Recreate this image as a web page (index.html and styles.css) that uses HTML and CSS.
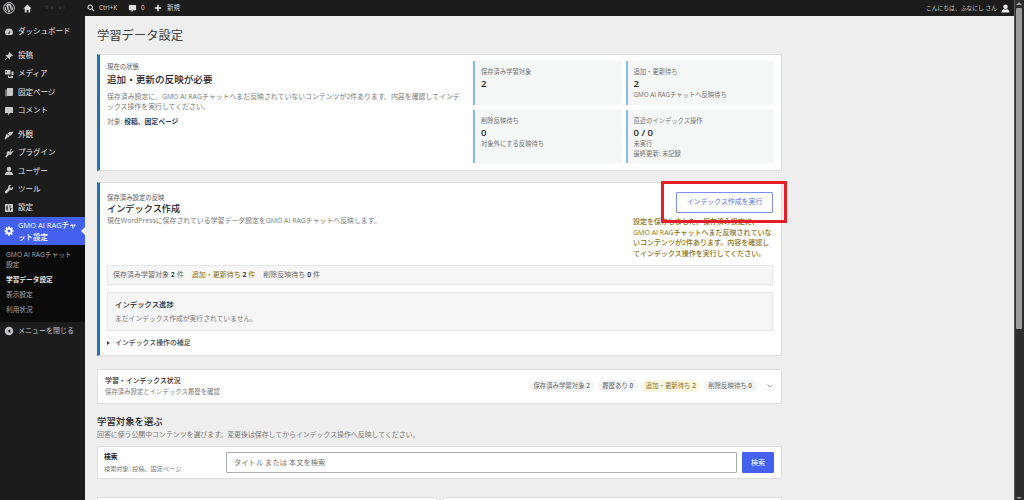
FILE: index.html
```html
<!DOCTYPE html>
<html lang="ja">
<head>
<meta charset="utf-8">
<title>学習データ設定</title>
<link rel="stylesheet" href="styles.css">
</head>
<body>
<div class="page">
  <header class="adminbar">
    <svg class="bar-wp" viewBox="0 0 20 20"><circle cx="10" cy="10" r="9" fill="none" stroke="#c3c4c7" stroke-width="1.600"/><path fill="#c3c4c7" d="M3 10c0 2.800 1.600 5.200 4 6.300L3.600 7.100A7 7 0 0 0 3 10zm11.700-.400c0-.900-.300-1.500-.600-2-.400-.600-.700-1.100-.700-1.600 0-.700.500-1.300 1.200-1.300A7 7 0 0 0 4 6.200h.500c.700 0 1.900-.100 1.900-.100.400 0 .400.500 0 .600l-.800.100 2.600 7.700 1.600-4.700-1.100-3-.800-.100c-.400 0-.300-.600 0-.600 0 0 1.200.100 1.900.100s1.900-.100 1.900-.100c.400 0 .400.500 0 .600l-.800.100 2.600 7.600.700-2.400c.300-1 .500-1.700.500-2.300zM10.100 10.700l-2.100 6.100a7 7 0 0 0 4.300-.100zM16.200 6.700c0 .700-.100 1.500-.500 2.500l-2.100 6.100A7 7 0 0 0 16.200 6.700z"/></svg>
    <svg class="bar-ico home" viewBox="0 0 20 20"><path fill="#e0e0e0" d="M10 1 1 10h3v9h4v-6h4v6h4v-9h3z"/></svg>
    <span class="bar-site">ｈ ｓ　ｓｉ</span>
    <svg class="bar-ico search" viewBox="0 0 20 20"><circle cx="8" cy="8" r="5.500" fill="none" stroke="#e8e8e8" stroke-width="2.600"/><path stroke="#e8e8e8" stroke-width="3" d="m12 12 6 6"/></svg>
    <span class="bar-text kbd">Ctrl+K</span>
    <svg class="bar-ico bubble" viewBox="0 0 20 20"><path fill="#e0e0e0" d="M3 2h14a1 1 0 0 1 1 1v10a1 1 0 0 1-1 1h-5l-4 5v-5H3a1 1 0 0 1-1-1V3a1 1 0 0 1 1-1z"/></svg>
    <span class="bar-text count">0</span>
    <svg class="bar-ico plus" viewBox="0 0 20 20"><path fill="#e8e8e8" d="M8 2h4v6h6v4h-6v6H8v-6H2V8h6z"/></svg>
    <span class="bar-text new">新規</span>
    <span class="bar-greet">こんにちは、ふなにし さん</span>
    <svg class="bar-ico user" viewBox="0 0 20 20"><circle cx="10" cy="6" r="5" fill="#ececec"/><path fill="#ececec" d="M1 19c0-4 3-7 5.500-8 2 1.500 5 1.500 7 0 2.500 1 5.500 4 5.500 8z"/></svg>
  </header>
  <div class="layout">
    <nav class="sidebar">
      <ul class="menu">
        <li class="item"><svg class="mi" viewBox="0 0 20 20"><path d="M10 3a8 8 0 0 0-8 8c0 2 .700 3.700 2 5h12c1.300-1.300 2-3 2-5a8 8 0 0 0-8-8zm1 8a1.500 1.500 0 1 1-2 .200L13 7z"/></svg>ダッシュボード</li>
        <li class="sep"></li>
        <li class="item"><svg class="mi" viewBox="0 0 20 20"><path d="m10.400 2 7.600 7.600-1.600 1-1.600-.600-3 3c.400 1.500.200 3-.600 4.200L7.400 13 3 18l-1 0 0-1 5-4.400-4.200-3.800c1.200-.800 2.700-1 4.200-.600l3-3-.600-1.600z"/></svg>投稿</li>
        <li class="item"><svg class="mi" viewBox="0 0 20 20"><path d="M2 2h11v9H2zm2.500 2a1.500 1.500 0 1 0 0 3 1.500 1.500 0 0 0 0-3zM8 13h2v3h3v-2h5v4H8zm7-8h4v7h-4z"/></svg>メディア</li>
        <li class="item"><svg class="mi" viewBox="0 0 20 20"><path d="M6 2h12v14c0 1-1 2-2 2H6zM3 5h2v14h9v0H5c-1 0-2-1-2-2z"/></svg>固定ページ</li>
        <li class="item"><svg class="mi" viewBox="0 0 20 20"><path d="M3 2h14a1 1 0 0 1 1 1v10a1 1 0 0 1-1 1h-5l-4 5v-5H3a1 1 0 0 1-1-1V3a1 1 0 0 1 1-1z"/></svg>コメント</li>
        <li class="sep"></li>
        <li class="item"><svg class="mi" viewBox="0 0 20 20"><path d="M19 3 11 4 7 7l5 5 4-3.500zM6 8l-3 2 1 1-3 6 2 2 5-5 1 1 2-3z"/></svg>外観</li>
        <li class="item"><svg class="mi" viewBox="0 0 20 20"><path d="m14 1 2 2-3 3 2 2 3-3 1 2-3 3-1 2c-1 2-3 2-5 1l-5 6-3-1 4-6c-1-2-1-4 1-5l2-1 2 2z"/></svg>プラグイン</li>
        <li class="item"><svg class="mi" viewBox="0 0 20 20"><circle cx="10" cy="6" r="4.500"/><path d="M2 18c0-4 3-7 8-7s8 3 8 7z"/></svg>ユーザー</li>
        <li class="item"><svg class="mi" viewBox="0 0 20 20"><path d="M17.500 5.500 14 9l-3-3 3.500-3.500c-2.500-1-5 0-6 2-.500 1-.500 2.500 0 3.500L2 15c-1 1 0 3 1 3.500s2 .500 3-.500l6.500-6.500c1 .500 2.500.500 3.500 0 2-1 3-3.500 1.500-6z"/></svg>ツール</li>
        <li class="item"><svg class="mi" viewBox="0 0 20 20"><path d="M2 2h16v16H2zm3 3v4h2V5zm0 6v4h2v-4h1V9H4v2zm6-6v4h2V5zm1 5v5h2v-3h1v-2z" fill-rule="evenodd"/></svg>設定</li>
        <li class="item current"><svg class="mi" viewBox="0 0 20 20"><path fill-rule="evenodd" d="m8.500 1h3l.500 2.500 1.500.600 2.200-1.400 2.100 2.100-1.400 2.200.600 1.500L19 8.500v3l-2.500.500-.600 1.500 1.400 2.200-2.100 2.100-2.200-1.400-1.500.600-.500 2.500h-3L8 16.500l-1.500-.600-2.200 1.400-2.100-2.100 1.400-2.200-.600-1.500L1 11.500v-3L3.500 8l.600-1.500-1.400-2.200 2.100-2.100 2.200 1.400L8 3.500zM10 7a3 3 0 1 0 0 6 3 3 0 0 0 0-6z"/></svg><span>GMO AI RAGチャット設定</span></li>
      </ul>
      <ul class="submenu">
        <li>GMO AI RAGチャット設定</li>
        <li class="on">学習データ設定</li>
        <li>表示設定</li>
        <li>利用状況</li>
      </ul>
      <div class="item collapse"><svg class="mi" viewBox="0 0 20 20"><path fill-rule="evenodd" d="M10 1.500a8.500 8.500 0 1 1 0 17 8.500 8.500 0 0 1 0-17zM12.500 6l-5 4 5 4z"/></svg>メニューを閉じる</div>
    </nav>
    <main class="main">
      <h1 class="title">学習データ設定</h1>

      <section class="card status">
        <div class="status-text">
          <p class="eyebrow">現在の状態</p>
          <h2 class="status-head">追加・更新の反映が必要</h2>
          <p class="desc">保存済み設定に、GMO AI RAGチャットへまだ反映されていないコンテンツが2件あります。内容を確認してインデックス操作を実行してください。</p>
          <p class="target">対象: <b>投稿、固定ページ</b></p>
        </div>
        <div class="stats">
          <div class="stat"><p class="stat-l">保存済み学習対象</p><p class="stat-n">2</p></div>
          <div class="stat"><p class="stat-l">追加・更新待ち</p><p class="stat-n">2</p><p class="stat-l">GMO AI RAGチャットへ反映待ち</p></div>
          <div class="stat"><p class="stat-l">削除反映待ち</p><p class="stat-n">0</p><p class="stat-l">対象外にする反映待ち</p></div>
          <div class="stat"><p class="stat-l">直近のインデックス操作</p><p class="stat-n">0 / 0</p><p class="stat-l">未実行</p><p class="stat-l">最終更新: 未記録</p></div>
        </div>
      </section>

      <section class="card index">
        <div class="index-top">
          <div class="index-text">
            <p class="eyebrow">保存済み設定の反映</p>
            <h2 class="index-head">インデックス作成</h2>
            <p class="desc">現在WordPressに保存されている学習データ設定をGMO AI RAGチャットへ反映します。</p>
          </div>
          <div class="index-act">
            <button class="run">インデックス作成を実行</button>
            <p class="notice">設定を保存しました。保存済み設定に、GMO AI RAGチャットへまだ反映されていないコンテンツが2件あります。内容を確認してインデックス操作を実行してください。</p>
          </div>
        </div>
        <div class="counts"><span>保存済み学習対象 <b>2</b> 件</span><span class="warn">追加・更新待ち <b>2</b> 件</span><span>削除反映待ち <b>0</b> 件</span></div>
        <div class="progress">
          <h3>インデックス進捗</h3>
          <p>まだインデックス作成が実行されていません。</p>
        </div>
        <p class="more"><i></i>インデックス操作の補足</p>
      </section>

      <section class="card accordion">
        <div>
          <h3>学習・インデックス状況</h3>
          <p>保存済み設定とインデックス履歴を確認</p>
        </div>
        <div class="pills">
          <span class="pill">保存済み学習対象 <b>2</b></span>
          <span class="pill">履歴あり <b>0</b></span>
          <span class="pill amber">追加・更新待ち <b>2</b></span>
          <span class="pill">削除反映待ち <b>0</b></span>
          <svg class="chev" viewBox="0 0 10 6"><path d="m1 1 4 4 4-4" fill="none" stroke="#646970" stroke-width="1.200"/></svg>
        </div>
      </section>

      <h2 class="sec-head">学習対象を選ぶ</h2>
      <p class="sec-desc">回答に使う公開中コンテンツを選びます。変更後は保存してからインデックス操作へ反映してください。</p>

      <section class="card search-box">
        <div class="search-label">
          <b>検索</b>
          <span>検索対象: 投稿、固定ページ</span>
        </div>
        <div class="search-field">タイトル または 本文を検索</div>
        <button class="search-btn">検索</button>
      </section>

      <div class="lists">
        <div class="card list"></div>
        <div class="card list"></div>
      </div>
    </main>
  </div>
  <div class="callout"></div>
</div>
<div class="scrollbar"><i class="up"></i><i class="thumb"></i><i class="down"></i></div>
</body>
</html>
```

FILE: styles.css
```css
* { box-sizing: border-box; }
html, body { margin: 0; height: 500px; overflow: hidden; }
body {
  display: flex;
  background: #eeeeee;
  font-family: "Open Sans", "Noto Sans CJK JP", sans-serif;
  font-size: 7px;
  color: #3c434a;
  line-height: 1.4;
}
p, h1, h2, h3, ul { margin: 0; padding: 0; list-style: none; font-weight: 400; }
.page { position: relative; flex: 1; min-width: 0; height: 500px; overflow: hidden; }

.scrollbar { width: 10px; flex: none; height: 500px; background: #2c2c2c; border-left: 1px solid #5a5a5a; padding: 2px 1px 1px 0; display: flex; flex-direction: column; align-items: center; }
.up { width: 0; height: 0; border: 3px solid transparent; border-top: 0; border-bottom: 3px solid #a0a0a0; }
.thumb { width: 6px; height: 321px; margin-top: 3px; background: #9c9c9c; border-radius: 1px; }
.down { width: 0; height: 0; margin-top: auto; border: 3px solid transparent; border-bottom: 0; border-top: 2px solid #a0a0a0; }

.adminbar { height: 16px; background: #1c1c1c; display: flex; align-items: center; color: #dcdcde; }
.bar-wp { width: 12px; height: 12px; margin-left: 3px; flex: none; }
.bar-ico { width: 9px; height: 9px; flex: none; }
.home { margin-left: 8px; }
.bar-site { margin-left: 13px; width: 42px; flex: none; font-size: 4px; color: #555; }
.search { width: 8px; height: 8px; }
.bar-text { font-size: 6.400px; flex: none; }
.kbd { margin-left: 4px; width: 20px; white-space: nowrap; }
.bubble { margin-left: 9px; }
.count { margin-left: 4px; width: 4px; }
.plus { margin-left: 9px; width: 8px; height: 8px; }
.new { margin-left: 5px; }
.bar-greet { margin-left: auto; font-size: 5.800px; color: #c8c8c8; white-space: nowrap; }
.user { margin-left: 4px; margin-right: 4px; }

.layout { display: flex; height: 484px; }
.sidebar { width: 85px; flex: none; background: #1c1c1c; color: #e8e8e8; font-size: 7.500px; }
.menu { padding-top: 6.500px; }
.item { display: flex; align-items: center; gap: 4px; min-height: 18.300px; padding-left: 4px; line-height: 11px; }
.mi { width: 10px; height: 10px; flex: none; fill: #c8c8c8; }
.sep { height: 5.700px; }
.current { background: #4361ee; color: #fff; font-weight: 500; padding: 2px 4px; min-height: 28px; line-height: 12px; position: relative; }
.current .mi { fill: #fff; }
.current::after { content: ""; position: absolute; right: 0; top: 10px; border: 4px solid transparent; border-right-color: #eeeeee; border-left: 0; }
.submenu { background: #0b0b0b; padding: 2.500px 9px 4.500px 6px; color: #a8a8a8; font-size: 6.700px; line-height: 10px; }
.submenu li { padding: 2.500px 0; }
.submenu .on { color: #e8e8e8; font-weight: 700; }
.collapse { color: #c3c4c7; font-size: 7px; }
.collapse .mi { fill: #c3c4c7; }

.main { flex: 1; min-width: 0; padding: 10px 232px 0 12px; }
.title { font-size: 12.300px; line-height: 19px; color: #3c3c3c; margin-bottom: 9px; }

.card { background: #fff; border: 1px solid #dcdcdc; }
.status { display: flex; height: 117px; border-left: 3px solid #2271b1; padding: 6px 7px 0 7px; gap: 12px; }
.status-text { flex: 1; min-width: 0; padding-top: 1px; }
.eyebrow { font-size: 6.400px; line-height: 9px; color: #555; }
.status-head { font-size: 9.600px; line-height: 15px; font-weight: 500; color: #1d2327; margin-top: .500px; }
.desc { font-size: 6.900px; line-height: 10px; color: #777; }
.status .desc { margin-top: 5px; }
.target { font-size: 6.800px; color: #777; margin-top: 5px; line-height: 10px; }
.target b { font-weight: 600; color: #1d3a5c; }
.stats { width: 301px; flex: none; display: grid; grid-template-columns: 1fr 1fr; grid-template-rows: 44px 53px; gap: 5px 4px; }
.stat { background: #f5f6f6; border-left: 2px solid #85b8ea; padding: 5.500px 6px; }
.stat-l { font-size: 6.300px; line-height: 9.500px; color: #707070; white-space: nowrap; }
.stat-n { font-size: 9.500px; line-height: 13px; font-weight: 600; color: #1d2327; margin-top: 1px; }

.index { margin-top: 11px; height: 174px; border-left: 3px solid #2271b1; padding: 8.500px 8px 0 7px; }
.index-top { display: flex; justify-content: space-between; height: 73.500px; }
.index-text { padding-top: 1px; }
.index-head { font-size: 9.200px; line-height: 12px; font-weight: 500; color: #1d2327; margin-top: 1px; margin-bottom: 1.500px; }
.index-act { width: 140px; flex: none; display: flex; flex-direction: column; align-items: flex-end; }
.run { width: 97px; height: 21px; flex: none; background: #fff; border: 1px solid #7d8fee; border-radius: 1px; color: #5570e8; font: inherit; font-size: 6.900px; padding: 0; }
.notice { width: 139px; align-self: flex-start; margin-top: 4.750px; font-size: 7px; line-height: 10.500px; color: #8a6f14; font-weight: 500; }
.counts { display: flex; gap: 8px; height: 20px; background: #f6f6f6; border: 1px solid #e5e6e7; align-items: center; padding-left: 5px; font-size: 7px; color: #666; }
.counts b { font-weight: 600; color: #1d2327; }
.warn { color: #8a6f14; }
.progress { margin-top: 7px; height: 39px; background: #f6f6f6; border: 1px solid #e5e6e7; padding: 5px 7px; }
.progress h3 { font-size: 7.400px; line-height: 12px; font-weight: 500; color: #1d2327; }
.progress p { font-size: 6.800px; line-height: 10px; color: #777; margin-top: 4px; }
.more { margin-top: 6px; font-size: 6.900px; line-height: 11px; font-weight: 500; color: #3c434a; display: flex; align-items: center; gap: 5px; }
.more i { border: 2.500px solid transparent; border-left: 3.500px solid #3c434a; border-right: 0; }

.accordion { margin-top: 13px; height: 34.500px; display: flex; justify-content: space-between; align-items: center; padding: 0 8px 0 7px; }
.accordion h3 { font-size: 6.900px; line-height: 11px; font-weight: 500; color: #1d2327; }
.accordion p { font-size: 6.400px; line-height: 10px; color: #777; margin-top: 1px; }
.pills { display: flex; align-items: center; gap: 3.500px; }
.pill { background: #f2f4f5; border-radius: 6px; padding: 1px 4.500px; font-size: 6.400px; line-height: 10px; color: #666; white-space: nowrap; }
.pill b { font-weight: 600; }
.amber { background: #fcf7e3; color: #8a6f14; }
.chev { width: 6px; height: 4px; margin: 0 0 0 7px; flex: none; }

.sec-head { margin-top: 10.500px; font-size: 9.400px; line-height: 15px; font-weight: 500; color: #1d2327; }
.sec-desc { font-size: 6.900px; line-height: 10px; color: #777; margin-top: 1px; }
.search-box { margin-top: 6.300px; height: 32.300px; display: flex; align-items: center; padding: 0 7px 0 6px; }
.search-label { width: 122px; flex: none; display: flex; flex-direction: column; }
.search-label b { font-size: 6.800px; line-height: 10px; font-weight: 600; color: #1d2327; }
.search-label span { font-size: 6.200px; line-height: 9px; color: #777; margin-top: 2.500px; }
.search-field { flex: 1; height: 21px; border: 1px solid #a8abb0; border-radius: 1px; background: #fff; padding-left: 7px; line-height: 19px; font-size: 7.300px; color: #707070; }
.search-btn { width: 32px; height: 21px; margin-left: 5px; background: #4361ee; border: 1px solid #4361ee; border-radius: 1px; color: #fff; font: inherit; font-size: 7px; padding: 0; }
.lists { display: grid; grid-template-columns: 1fr 1fr; gap: 6px; margin-top: 18px; }
.list { height: 60px; }

.callout { position: absolute; left: 661px; top: 181px; width: 126px; height: 42px; border: 3px solid #e41e26; }
```
